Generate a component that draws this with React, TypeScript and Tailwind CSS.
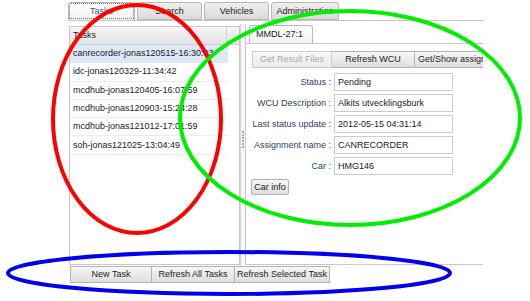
import React from "react";

const tasks = [
  "canrecorder-jonas120515-16:30:03",
  "idc-jonas120329-11:34:42",
  "mcdhub-jonas120405-16:07:59",
  "mcdhub-jonas120903-15:24:28",
  "mcdhub-jonas121012-17:01:59",
  "soh-jonas121025-13:04:49",
];

const fields: [string, string][] = [
  ["Status :", "Pending"],
  ["WCU Description :", "Alkits utvecklingsburk"],
  ["Last status update :", "2012-05-15 04:31:14"],
  ["Assignment name :", "CANRECORDER"],
  ["Car :", "HMG146"],
];

function Tab({ label, w, active }: { label: string; w: string; active?: boolean }) {
  return (
    <div
      className={
        active
          ? `${w} h-[18px] flex items-center justify-center rounded-t-[3px] border border-b-0 border-[#b9b9b9] bg-gradient-to-b from-[#ffffff] to-[#f1f1f1] text-[#3d5a86] outline-1 outline-dotted outline-[#777] -outline-offset-2`
          : `${w} h-[18px] flex items-center justify-center rounded-t-[3px] border border-[#b9b9b9] bg-gradient-to-b from-[#efefef] to-[#d9d9d9] text-[#222]`
      }
    >
      {label}
    </div>
  );
}

export default function App() {
  return (
    <div className="relative w-[530px] h-[301px] bg-white overflow-hidden font-['Liberation_Sans',Arial,sans-serif] text-[9px] leading-none text-[#222]">
      <div className="ml-[68px] w-[416px] pt-[3px]">
        {/* top tab bar */}
        <div className="flex items-end gap-[2px] h-[18px] border-b border-[#c4c4c4]">
          <Tab label="Tasks" w="w-[67px]" active />
          <Tab label="Search" w="w-[65px]" />
          <Tab label="Vehicles" w="w-[65px]" />
          <Tab label="Administration" w="w-[68px]" />
        </div>

        {/* body */}
        <div className="flex h-[244px]">
          {/* left list panel */}
          <div className="mt-[5px] ml-[1px] w-[171px] border border-[#c8c8c8] flex flex-col bg-white">
            <div className="flex h-[18px] border-b border-[#cfcfcf] bg-gradient-to-b from-[#f7f7f7] to-[#e3e3e3]">
              <div className="w-[157px] border-r border-[#d0d0d0] flex items-center pl-[3px] text-[#222]">Tasks</div>
              <div className="flex-1" />
            </div>
            <div className="flex-1 flex">
              <div className="w-[158px] flex flex-col">
                {tasks.map((t, i) => (
                  <div
                    key={t}
                    className={
                      i === 0
                        ? "h-[18.3px] flex items-center pl-[3px] border-b border-[#e6e6e6] bg-[#dce7f7] whitespace-nowrap overflow-hidden"
                        : "h-[18.3px] flex items-center pl-[3px] border-b border-[#ececec] whitespace-nowrap overflow-hidden"
                    }
                  >
                    {t}
                  </div>
                ))}
              </div>
              <div className="flex-1" />
            </div>
          </div>

          {/* splitter */}
          <div className="mt-[3px] w-[5px] flex items-center justify-center bg-[#f7f7f7] border-l border-[#d4d4d4]">
            <div className="flex flex-col gap-[1px] mb-[10px]">
              {[0, 1, 2, 3, 4, 5].map((d) => (
                <div key={d} className="w-[2px] h-[2px] bg-[#a9a9a9]" />
              ))}
            </div>
          </div>

          {/* right panel */}
          <div className="mt-[3px] w-[238px] border-l border-b border-[#c8c8c8] flex flex-col overflow-hidden">
            <div className="h-[20px] flex items-end pl-[3px] border-b border-[#c8c8c8]">
              <div className="w-[64px] h-[18px] rounded-t-[3px] border border-b-0 border-[#b9b9b9] bg-gradient-to-b from-[#ffffff] to-[#f3f3f3] flex items-center pl-[6px] text-[#222]">
                MMDL-27:1
              </div>
            </div>
            <div className="pt-[7px] pl-[6px] flex flex-col">
              <div className="flex h-[17px] overflow-hidden whitespace-nowrap">
                <div className="w-[80px] shrink-0 flex items-center justify-center border border-[#cfcfcf] bg-gradient-to-b from-[#f8f8f8] to-[#ececec] text-[#a8a8a8]">
                  Get Result Files
                </div>
                <div className="w-[83px] shrink-0 flex items-center justify-center border border-l-0 border-[#b3b3b3] bg-gradient-to-b from-[#f7f7f7] to-[#dedede]">
                  Refresh WCU
                </div>
                <div className="w-[100px] shrink-0 flex items-center pl-[3px] border border-l-0 border-[#b3b3b3] bg-gradient-to-b from-[#f7f7f7] to-[#dedede]">
                  Get/Show assignments
                </div>
              </div>
              <div className="mt-[5px] flex flex-col gap-[3px]">
                {fields.map(([l, v]) => (
                  <div key={l} className="flex items-center h-[18px]">
                    <div className="w-[79px] text-right whitespace-nowrap text-[#2b3f63]">{l}</div>
                    <div className="ml-[3px] w-[119px] h-[18px] border border-[#cccccc] bg-white flex items-center pl-[3px] text-[#222]">
                      {v}
                    </div>
                  </div>
                ))}
              </div>
              <div className="mt-[4px] -ml-[1px] w-[38px] h-[16px] flex items-center justify-center rounded-[2px] border border-[#b3b3b3] bg-gradient-to-b from-[#f7f7f7] to-[#dedede]">
                Car info
              </div>
            </div>
          </div>
        </div>

        {/* bottom buttons */}
        <div className="mt-[1px] ml-[2px] flex h-[17px] whitespace-nowrap">
          <div className="w-[82px] flex items-center justify-center border border-[#b3b3b3] bg-gradient-to-b from-[#f7f7f7] to-[#dedede]">New Task</div>
          <div className="w-[83px] flex items-center justify-center border border-l-0 border-[#b3b3b3] bg-gradient-to-b from-[#f7f7f7] to-[#dedede]">Refresh All Tasks</div>
          <div className="w-[95px] flex items-center justify-center border border-l-0 border-[#b3b3b3] bg-gradient-to-b from-[#f7f7f7] to-[#dedede]">Refresh Selected Task</div>
        </div>
      </div>

      {/* annotation overlay */}
      <svg className="absolute inset-0 pointer-events-none" width="530" height="301" viewBox="0 0 530 301">
        <ellipse cx="137" cy="119" rx="84" ry="114" fill="none" stroke="#ff0000" strokeWidth="4" />
        <ellipse cx="350" cy="118" rx="170" ry="107" fill="none" stroke="#00ee00" strokeWidth="4" />
        <ellipse cx="229" cy="273" rx="221" ry="21" fill="none" stroke="#0000ee" strokeWidth="4" />
      </svg>
    </div>
  );
}
